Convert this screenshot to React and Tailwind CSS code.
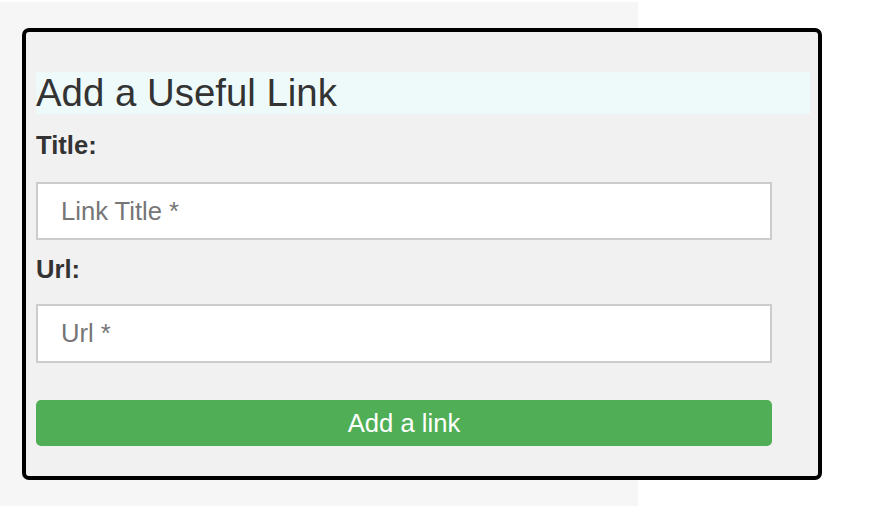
export default function App() {
  return (
    <div className="w-[870px] h-[532px] bg-white pt-[2px]" style={{ fontFamily: '"Liberation Sans", Arial, sans-serif' }}>
      <div className="w-[638px] h-[504px] bg-[#f6f6f6] pl-[22px] pt-[26px]">
        <div className="w-[800px] h-[452px] border-[4px] border-black rounded-[7px] bg-[#f1f1f1] pl-[10px] pt-[40px]">
          <h2 className="w-[774px] h-[42px] bg-[#eefafa] text-[38.4px] leading-[42px] text-[#333]">Add a Useful Link</h2>
          <form className="flex flex-col" onSubmit={(e) => e.preventDefault()}>
            <label className="mt-[17px] text-[25.6px] leading-[29px] font-bold text-[#333]">Title:</label>
            <input
              type="text"
              placeholder="Link Title *"
              className="mt-[22px] w-[736px] h-[58px] border-2 border-[#ccc] bg-white px-[23px] text-[25.6px] text-[#333] placeholder:text-[#767676] outline-none"
            />
            <label className="mt-[15px] text-[25.6px] leading-[29px] font-bold text-[#333]">Url:</label>
            <input
              type="text"
              placeholder="Url *"
              className="mt-[20px] w-[736px] h-[59px] border-2 border-[#ccc] bg-white px-[23px] text-[25.6px] text-[#333] placeholder:text-[#767676] outline-none"
            />
            <button
              type="submit"
              className="mt-[37px] w-[736px] h-[46px] rounded-[5px] bg-[#50af56] text-white text-[25.6px] leading-[46px] text-center"
            >
              Add a link
            </button>
          </form>
        </div>
      </div>
    </div>
  );
}
